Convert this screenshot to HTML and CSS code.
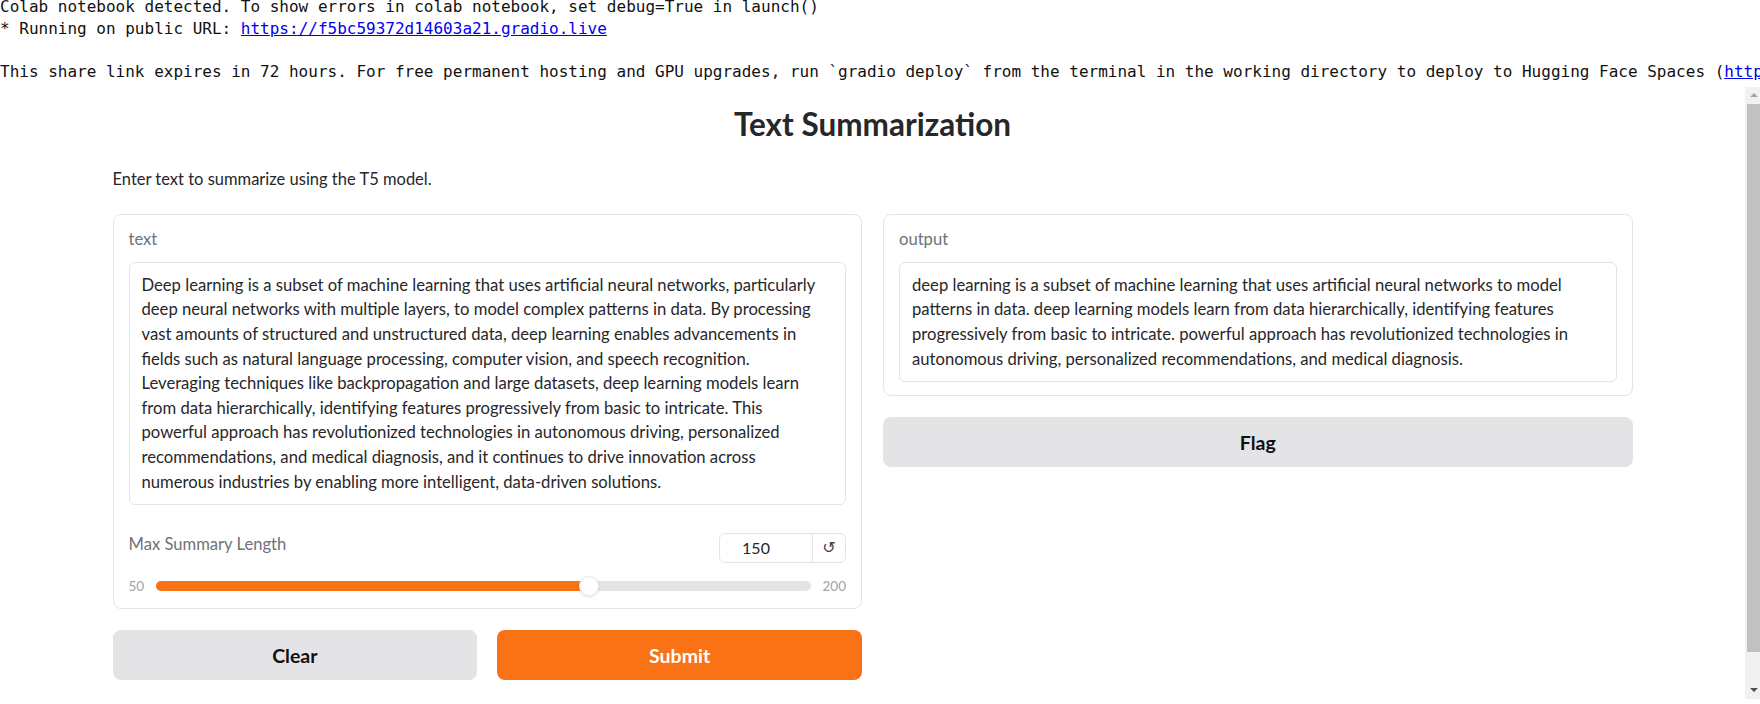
FILE: index.html
```html
<!DOCTYPE html>
<html lang="en">
<head>
<meta charset="utf-8">
<title>Text Summarization</title>
<link rel="stylesheet" href="styles.css">
</head>
<body>
<div class="log">
  <div class="log-line">Colab notebook detected. To show errors in colab notebook, set debug=True in launch()</div>
  <div class="log-line"><span>* Running on public URL: </span><a class="link" href="#">https://f5bc59372d14603a21.gradio.live</a></div>
  <div class="log-line"> </div>
  <div class="log-line"><span>This share link expires in 72 hours. For free permanent hosting and GPU upgrades, run `gradio deploy` from the terminal in the working directory to deploy to Hugging Face Spaces (</span><a class="link" href="#">https://huggingface.co/spaces</a><span>)</span></div>
</div>
<div class="frame">
  <div class="viewport">
    <div class="app">
      <h1 class="title">Text Summarization</h1>
      <p class="desc">Enter text to summarize using the T5 model.</p>
      <div class="cols">
        <div class="col">
          <div class="block">
            <div class="label">text</div>
            <div class="textbox">Deep learning is a subset of machine learning that uses artificial neural networks, particularly<br>deep neural networks with multiple layers, to model complex patterns in data. By processing<br>vast amounts of structured and unstructured data, deep learning enables advancements in<br>fields such as natural language processing, computer vision, and speech recognition.<br>Leveraging techniques like backpropagation and large datasets, deep learning models learn<br>from data hierarchically, identifying features progressively from basic to intricate. This<br>powerful approach has revolutionized technologies in autonomous driving, personalized<br>recommendations, and medical diagnosis, and it continues to drive innovation across<br>numerous industries by enabling more intelligent, data-driven solutions.</div>
            <div class="slider-head">
              <div class="label">Max Summary Length</div>
              <div class="num">
                <span class="num-val">150</span>
                <span class="num-reset">&#8634;</span>
              </div>
            </div>
            <div class="slider-row">
              <span class="lim">50</span>
              <div class="track">
                <div class="fill" style="width:66.67%"></div>
                <div class="thumb" style="left:66.67%"></div>
              </div>
              <span class="lim">200</span>
            </div>
          </div>
          <div class="btns">
            <button class="btn sec">Clear</button>
            <button class="btn pri">Submit</button>
          </div>
        </div>
        <div class="col">
          <div class="block">
            <div class="label">output</div>
            <div class="textbox">deep learning is a subset of machine learning that uses artificial neural networks to model<br>patterns in data. deep learning models learn from data hierarchically, identifying features<br>progressively from basic to intricate. powerful approach has revolutionized technologies in<br>autonomous driving, personalized recommendations, and medical diagnosis.</div>
          </div>
          <button class="btn sec">Flag</button>
        </div>
      </div>
    </div>
  </div>
  <div class="scrollbar">
    <div class="sb-btn"><span class="tri-up"></span></div>
    <div class="sb-track"><div class="sb-thumb"></div></div>
    <div class="sb-btn"><span class="tri-down"></span></div>
  </div>
</div>
</body>
</html>
```
FILE: styles.css
```css
html, body {
  margin: 0;
  padding: 0;
  background: #ffffff;
}
body {
  width: 1760px;
  height: 704px;
  overflow: hidden;
}
.log {
  margin: -4px 0 0 0;
  font-family: "DejaVu Sans Mono", "Liberation Mono", monospace;
  font-size: 16px;
  color: #111111;
}
.log-line {
  height: 21.7px;
  line-height: 21.7px;
  white-space: pre;
  overflow: hidden;
}
.link {
  color: #0000ee;
  text-decoration: underline;
}
.frame {
  margin-top: 4px;
  height: 612px;
  display: flex;
}
.viewport {
  flex: 1;
  overflow: hidden;
  font-family: Lato, "Noto Sans", sans-serif;
  color: #27272a;
}
.app {
  width: 1520px;
  margin: 0 auto;
}
.title {
  margin: 19px 0 0 0;
  text-align: center;
  font-size: 31.5px;
  line-height: 36px;
  font-weight: 700;
  color: #27272a;
}
.desc {
  margin: 26px 0 0 0;
  font-size: 16.5px;
  line-height: 22px;
}
.cols {
  margin-top: 24px;
  display: flex;
  gap: 21px;
  align-items: flex-start;
}
.col {
  flex: 1;
  display: flex;
  flex-direction: column;
  gap: 21px;
}
.block {
  border: 1px solid #e4e4e7;
  border-radius: 8px;
  padding: 13px 15px 13px;
  background: #fff;
}
.label {
  font-size: 16.6px;
  line-height: 22px;
  color: #71717a;
}
.textbox {
  margin-top: 12px;
  border: 1px solid #e4e4e7;
  border-radius: 6px;
  padding: 10px 12px;
  font-size: 16.65px;
  line-height: 24.6px;
  color: #27272a;
  white-space: nowrap;
  overflow: hidden;
}
.slider-head {
  margin-top: 28px;
  display: flex;
  justify-content: space-between;
  align-items: flex-start;
}
.num {
  display: flex;
  height: 30px;
  width: 127px;
  box-sizing: border-box;
  border: 1px solid #e4e4e7;
  border-radius: 6px;
}
.num-val {
  width: 93px;
  box-sizing: border-box;
  padding-right: 20px;
  text-align: center;
  font-size: 16px;
  line-height: 28px;
  color: #27272a;
  border-right: 1px solid #e4e4e7;
}
.num-reset {
  flex: 1;
  text-align: center;
  font-family: "DejaVu Sans", sans-serif;
  font-size: 16px;
  line-height: 28px;
  color: #3f3f46;
}
.slider-row {
  margin-top: 14px;
  height: 18px;
  display: flex;
  align-items: center;
  gap: 12px;
}
.lim {
  font-size: 13.5px;
  color: #a1a1aa;
}
.track {
  flex: 1;
  height: 10px;
  border-radius: 5px;
  background: #e4e4e7;
  position: relative;
}
.fill {
  height: 100%;
  border-radius: 5px;
  background: #f97316;
}
.thumb {
  position: absolute;
  top: -5px;
  width: 20px;
  height: 20px;
  margin-left: -13px;
  box-sizing: border-box;
  border-radius: 50%;
  background: #fff;
  border: 1px solid #ececef;
  box-shadow: 0 1px 3px rgba(0, 0, 0, 0.12);
}
.btns {
  display: flex;
  gap: 20px;
}
.btns .btn {
  flex: 1;
}
.btn {
  height: 50px;
  border: none;
  border-radius: 8px;
  font-family: Lato, "Noto Sans", sans-serif;
  font-size: 19.5px;
  font-weight: 700;
  cursor: pointer;
}
.sec {
  background: #e4e4e7;
  color: #111111;
}
.pri {
  background: #f97316;
  color: #ffffff;
}
.scrollbar {
  width: 15px;
  background: #f1f1f1;
  display: flex;
  flex-direction: column;
}
.sb-btn {
  height: 17px;
  display: flex;
  align-items: center;
  justify-content: center;
  padding-left: 2px;
}
.tri-up {
  width: 0;
  height: 0;
  border-left: 4px solid transparent;
  border-right: 4px solid transparent;
  border-bottom: 4px solid #a3a3a3;
}
.tri-down {
  width: 0;
  height: 0;
  border-left: 4px solid transparent;
  border-right: 4px solid transparent;
  border-top: 4px solid #505050;
}
.sb-track {
  flex: 1;
  padding-left: 2px;
}
.sb-thumb {
  height: 548px;
  background: #c1c1c1;
}
```
